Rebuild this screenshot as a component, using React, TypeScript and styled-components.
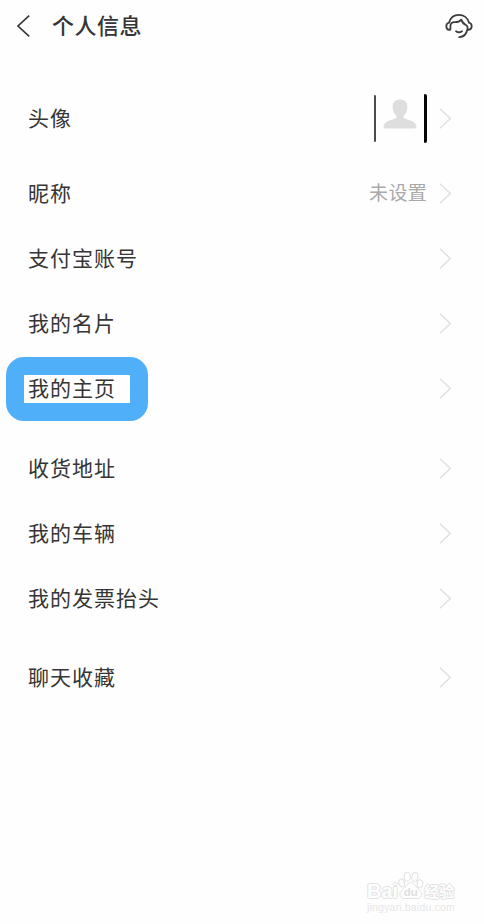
import React from "react";
import styled, { createGlobalStyle } from "styled-components";

const GlobalStyle = createGlobalStyle`
  * { box-sizing: border-box; }
  body {
    margin: 0;
    background: #fefefe;
    color: #353535;
    font-family: "Noto Sans CJK SC", "Noto Sans", sans-serif;
    overflow: hidden;
  }
  svg { display: block; flex: none; text-shadow: none; }
`;

const Page = styled.main`
  display: flex;
  flex-direction: column;
  width: 484px;
  height: 924px;
`;

const Header = styled.header`
  display: flex;
  align-items: center;
  height: 52px;
  padding: 0 11px 0 16px;
`;

const Title = styled.h1`
  flex: 1;
  margin: 0 0 4px 21px;
  font-size: 22px;
  line-height: 32px;
  font-weight: 500;
  letter-spacing: 0.5px;
`;

const List = styled.div`
  display: flex;
  flex-direction: column;
  padding-top: 24px;
`;

const Group = styled.section<{ $gap?: number }>`
  margin-bottom: ${(p) => p.$gap ?? 0}px;
`;

const Row = styled.div<{ $tall?: boolean }>`
  display: flex;
  align-items: center;
  justify-content: space-between;
  height: ${(p) => (p.$tall ? 85 : 65)}px;
  padding: 0 32px 0 28px;
`;

const Label = styled.span`
  position: relative;
  margin-bottom: 4px;
  font-size: 21px;
  line-height: 30px;
  letter-spacing: 1px;
`;

const Highlight = styled.span`
  position: absolute;
  left: -22px;
  top: -15px;
  width: 142px;
  height: 64px;
  border: 18px solid #50aff9;
  border-radius: 18px;
`;

const Trailing = styled.div`
  display: flex;
  align-items: center;
  gap: 12px;
`;

const Value = styled.span`
  color: #a9a9a9;
  font-size: 19px;
  line-height: 28px;
  letter-spacing: 0.3px;
  margin-top: -3px;
`;

const Avatar = styled.div`
  display: flex;
  align-items: center;
  justify-content: center;
  width: 53px;
  height: 50px;
  padding: 0 2px 8px 0;
  position: relative;
`;

const Edge = styled.span<{ $right?: boolean }>`
  position: absolute;
  ${(p) => (p.$right ? "right: 0; top: 0; width: 3px; height: 49px;" : "left: 0; top: 1px; width: 2px; height: 47px;")}
  background: ${(p) => (p.$right ? "#050505" : "#4b4b4b")};
  border-radius: 1px 2px 2px 1px;
`;

const Watermark = styled.footer`
  display: flex;
  flex-direction: column;
  width: 92px;
  margin: auto 25px 11px auto;
  color: #fefefe;
  font-family: "Liberation Sans", sans-serif;
  text-shadow: -1px 0 #e2e2e2, 1px 0 #e2e2e2, 0 -1px #e2e2e2, 0 1px #e2e2e2;
`;

const Brand = styled.div`
  display: flex;
  align-items: flex-end;
  height: 31px;
  font-size: 20px;
  line-height: 20px;
  font-weight: 700;
`;

const BrandCn = styled.span`
  margin-left: 0;
  font: 700 15px/21px "Noto Sans CJK SC", sans-serif;
`;

const Site = styled.div`
  color: #e6e6e6;
  font-size: 10.5px;
  line-height: 12px;
  letter-spacing: 0.2px;
  white-space: nowrap;
  text-shadow: none;
`;

const Chevron = () => (
  <svg width="13" height="22" viewBox="0 0 13 22" fill="none" stroke="#e0e0e0" strokeWidth="1.5">
    <path d="M1 .7 11.3 10.5 1 20.3" />
  </svg>
);

const BackIcon = () => (
  <svg width="15" height="24" viewBox="0 0 15 24" fill="none" stroke="#383838" strokeWidth="1.7">
    <path d="M13.2 1.6 2 12l11.2 10.4" />
  </svg>
);

const ServiceIcon = () => (
  <svg width="28" height="26" viewBox="0 0 28 26" fill="none" stroke="#3c3c3c" strokeWidth="1.8" strokeLinecap="round" strokeLinejoin="round">
    <path d="M4.2 9.5C5.4 4.7 9.3 1.8 14 1.8s8.7 2.9 9.9 7.7" />
    <path d="M4.2 9.5C2.3 10 1.3 11.3 1.3 13.2s1.2 3.5 3.1 3.7c.6.1 1-.2 1-.8v-2.8c0-2.6 1.6-4.3 4.3-4.2 2.9.1 5.2-.8 6.6-2.5 1 3 2.6 4.5 4.7 5.4 1.2.6 1.6 1.5 1.6 2.7V16c0 .6.4 1 1 .8 1.9-.3 3.1-1.7 3.1-3.6s-1-3.2-2.8-3.7" />
    <path d="M22.2 17c-.7 4-3.6 6.8-7.9 7.1M11 18.2c1.7 1.2 4.3 1.2 6 0" />
  </svg>
);

const Person = () => (
  <svg width="34" height="31" viewBox="0 0 34 31" fill="#dedede">
    <path d="M17 .5c-5 0-7.8 3.4-7.4 7.6.1 3.9 1.5 7.1 3.9 9v2C8.5 21.5 1.5 22 .6 27c-.3 1.8.5 2.5 2.3 2.5h28.2c1.8 0 2.6-.7 2.3-2.5-.9-5-7.9-5.5-12.9-7.9v-2c2.4-1.9 3.8-5.1 3.9-9C24.8 3.9 22 .5 17 .5Z" />
  </svg>
);

const PawBadge = () => (
  <svg width="26" height="31" viewBox="0 0 28 31" fill="#fefefe" stroke="#dedede" strokeWidth="1">
    <ellipse cx="10" cy="6" rx="3.3" ry="4.8" />
    <ellipse cx="18.2" cy="6.3" rx="3.3" ry="4.8" transform="rotate(12 18.2 6.3)" />
    <ellipse cx="4" cy="12.8" rx="3" ry="4.3" transform="rotate(-15 4 12.8)" />
    <ellipse cx="23.6" cy="13.6" rx="3.1" ry="4.3" transform="rotate(10 23.6 13.6)" />
    <path d="M13.8 12.5c-4 0-5.3 4.4-8 6.6-3.3 2.7-4.7 5.3-3 8.3 1.7 2.9 5.2 2 11 2s9.2 1 11-2c1.7-3 .3-5.6-3-8.3-2.7-2.2-4-6.6-8-6.6Z" />
    <text x="13.8" y="26.6" textAnchor="middle" fontFamily="Liberation Sans, sans-serif" fontSize="12.5" fontWeight="700" fill="#dedede" stroke="none">du</text>
  </svg>
);

const Item = ({ label, value, avatar, selected }: { label: string; value?: string; avatar?: boolean; selected?: boolean }) => (
  <Row $tall={avatar}>
    <Label>
      {label}
      {selected && <Highlight />}
    </Label>
    <Trailing>
      {value && <Value>{value}</Value>}
      {avatar && (
        <Avatar>
          <Edge />
          <Person />
          <Edge $right />
        </Avatar>
      )}
      <Chevron />
    </Trailing>
  </Row>
);

export default function App() {
  return (
    <Page>
      <GlobalStyle />
      <Header>
        <BackIcon />
        <Title>个人信息</Title>
        <ServiceIcon />
      </Header>
      <List>
        <Group $gap={15}>
          <Item label="头像" avatar />
          <Item label="昵称" value="未设置" />
          <Item label="支付宝账号" />
          <Item label="我的名片" />
          <Item label="我的主页" selected />
        </Group>
        <Group $gap={14}>
          <Item label="收货地址" />
          <Item label="我的车辆" />
          <Item label="我的发票抬头" />
        </Group>
        <Group>
          <Item label="聊天收藏" />
        </Group>
      </List>
      <Watermark>
        <Brand>
          Bai
          <PawBadge />
          <BrandCn>经验</BrandCn>
        </Brand>
        <Site>jingyan.baidu.com</Site>
      </Watermark>
    </Page>
  );
}
